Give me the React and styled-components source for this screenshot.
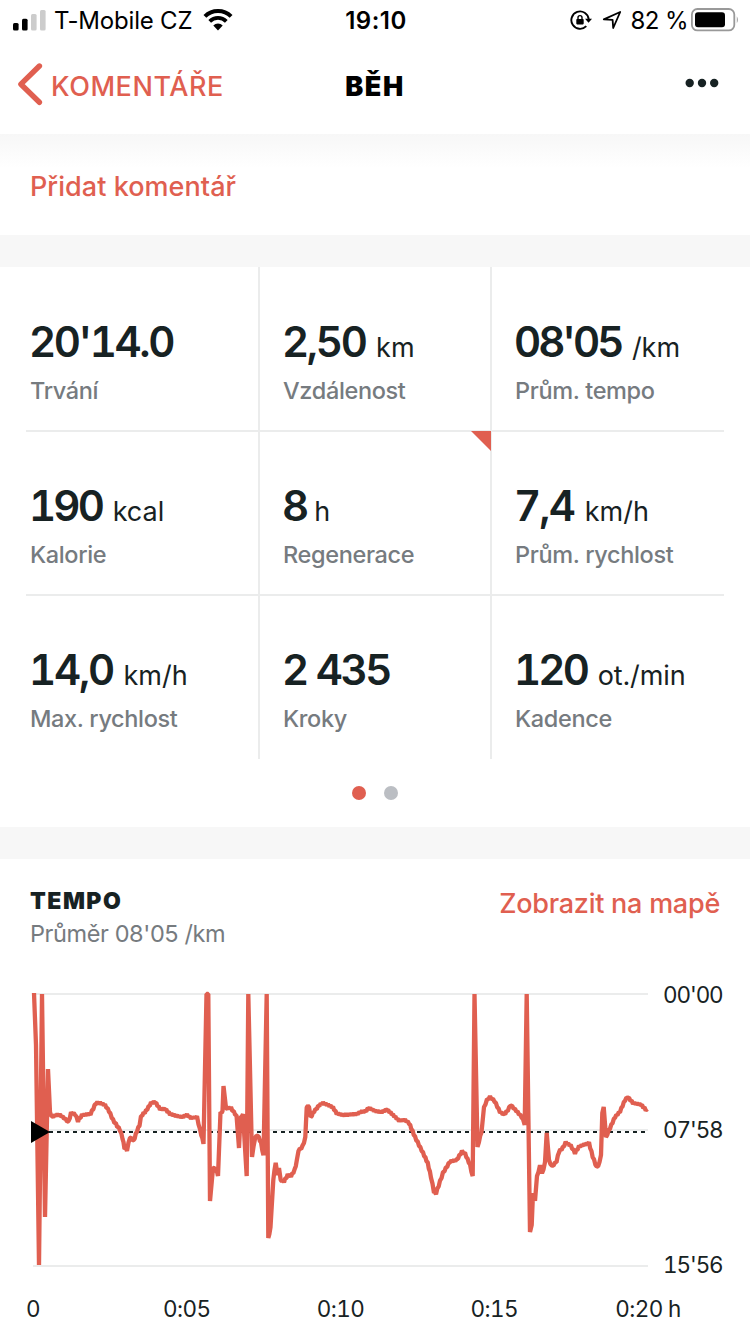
import React from "react";
import styled, { createGlobalStyle } from "styled-components";

const GlobalStyle = createGlobalStyle`
  * {
    box-sizing: border-box;
  }
  body {
    margin: 0;
    background-color: #ffffff;
    color: #172223;
    font-family: Inter, "Liberation Sans", sans-serif;
  }
`;

const Screen = styled.div`
  width: 750px;
  height: 1334px;
  overflow: hidden;
  background-color: #ffffff;
`;

const StatusBar = styled.div`
  display: grid;
  grid-template-columns: minmax(0, 1fr) auto minmax(0, 1fr);
  align-items: center;
  height: 40px;
  padding: 0 11px 0 13px;
  color: #000000;
  font-size: 24px;
  line-height: 38px;
`;

const StatusGroup = styled.div`
  display: flex;
  align-items: center;
  justify-content: ${({ $end }) => ($end ? "flex-end" : "flex-start")};
`;

const Carrier = styled.span`
  margin: 0 11px 0 8px;
  padding-top: 2px;
  letter-spacing: -0.2px;
`;

const Clock = styled.span`
  padding-top: 2px;
  font-weight: 600;
  letter-spacing: 0.5px;
`;

const Percent = styled.span`
  margin: 0 3px 0 9px;
  padding-top: 2px;
  letter-spacing: -0.6px;
`;

const Header = styled.header`
  display: grid;
  grid-template-columns: minmax(0, 1fr) auto minmax(0, 1fr);
  align-items: center;
  height: 94px;
  padding: 0 16px;
`;

const Back = styled.div`
  display: flex;
  align-items: center;
  gap: 7px;
  color: #e05f50;
  font-size: 27px;
  font-weight: 500;
  line-height: 40px;
  letter-spacing: 0.55px;

  svg {
    margin-bottom: 6px;
  }
`;

const Title = styled.h1`
  margin: 0;
  color: #000000;
  font-size: 27px;
  font-weight: 900;
  line-height: 40px;
  letter-spacing: 1.6px;
`;

const MoreIcon = styled.svg`
  justify-self: end;
  margin: 0 15px 8px 0;
`;

const Comment = styled.div`
  height: 101px;
  padding: 33px 30px 0;
  background: linear-gradient(#f7f7f7, #ffffff 34px);
`;

const Action = styled.span`
  color: #e05f50;
  font-size: 27px;
  font-weight: 500;
  line-height: 40px;
  letter-spacing: ${({ $spacing }) => $spacing || "0"};
`;

const Gap = styled.div`
  height: 32px;
  background-color: #f7f7f7;
`;

const Stats = styled.div`
  display: grid;
  grid-template-columns: 234px 232px 232px;
  grid-template-rows: 165px 164px 163px;
  padding: 0 26px;
`;

const Cell = styled.div`
  position: relative;
  display: flex;
  flex-direction: column;
  justify-content: flex-end;
  padding: 0 0 24px 23px;
  border-right: 2px solid #ebecec;
  border-bottom: 2px solid #ebecec;

  &:nth-child(3n + 1) {
    padding-left: 4px;
  }
  &:nth-child(3n) {
    border-right: none;
  }
  &:nth-child(n + 7) {
    padding-bottom: 25px;
    border-bottom: none;
  }
`;

const Value = styled.div`
  display: flex;
  align-items: baseline;
  gap: 10.5px;
  height: 48px;
  margin-left: -1px;
  font-size: 42px;
  font-weight: 600;
  line-height: 48px;
  white-space: pre;
  letter-spacing: ${({ $spacing }) => $spacing}px;
  font-feature-settings: "tnum";
`;

const Unit = styled.span`
  font-size: 27px;
  font-weight: 400;
  line-height: 30px;
  letter-spacing: 0;
`;

const Label = styled.div`
  margin-top: 10px;
  color: #767b7f;
  font-size: 23.5px;
  font-weight: 500;
  line-height: 30px;
  letter-spacing: -0.35px;
`;

const Corner = styled.div`
  position: absolute;
  top: -1px;
  right: -1px;
  width: 20px;
  height: 20px;
  background-color: #e05f50;
  clip-path: polygon(0 0, 100% 0, 100% 100%);
`;

const Pager = styled.div`
  display: flex;
  justify-content: center;
  align-items: center;
  gap: 18px;
  height: 68px;
`;

const Dot = styled.span`
  width: 14px;
  height: 14px;
  border-radius: 50%;
  background-color: ${({ $active }) => ($active ? "#e05f50" : "#bbbec3")};
`;

const Tempo = styled.section`
  padding-top: 25px;
`;

const TempoHead = styled.div`
  display: flex;
  justify-content: space-between;
  height: 101px;
  padding: 0 30px;
`;

const TempoTitle = styled.h2`
  margin: 0 0 1px;
  font-size: 23px;
  font-weight: 900;
  line-height: 34px;
  letter-spacing: 1.5px;
`;

const Average = styled.div`
  color: #767b7f;
  font-size: 23.5px;
  line-height: 30px;
  letter-spacing: -0.4px;
`;

const Plot = styled.div`
  display: flex;
  gap: 13px;
  height: 290px;
  padding-left: 30px;
`;

const Scale = styled.div`
  display: flex;
  flex-direction: column;
  justify-content: space-between;
  height: 300px;
  margin-top: -5px;
  font-size: 22.5px;
  line-height: 30px;
  letter-spacing: -1.1px;
  font-feature-settings: "tnum";
`;

const TimeAxis = styled.div`
  display: flex;
  justify-content: space-between;
  width: 648px;
  padding-left: 33px;
  margin-top: 18px;
  font-size: 22.5px;
  line-height: 32px;
  letter-spacing: -0.6px;
  font-feature-settings: "tnum";
`;

const Tick = styled.span`
  display: flex;
  justify-content: center;
  width: 0;
  white-space: nowrap;
`;

const stats = [
  { value: "20'14.0", spacing: -2.4, label: "Trvání" },
  { value: "2,50", unit: "km", spacing: -2.3, label: "Vzdálenost" },
  { value: "08'05", unit: "/km", spacing: -3, label: "Prům. tempo" },
  { value: "190", unit: "kcal", spacing: -2.8, label: "Kalorie" },
  { value: "8", unit: "h", spacing: -5.5, label: "Regenerace", marked: true },
  { value: "7,4", unit: "km/h", spacing: -1.8, label: "Prům. rychlost" },
  { value: "14,0", unit: "km/h", spacing: -2.2, label: "Max. rychlost" },
  { value: "2 435", spacing: -2.4, label: "Kroky" },
  { value: "120", unit: "ot./min", spacing: -2.8, label: "Kadence" },
];

const pace = [
  [34, 993], [36, 1045], [39, 1265], [42, 994], [45, 1217], [48, 1069], [50, 1112],
  [52, 1117], [56, 1115], [60, 1115], [64, 1118], [68.5, 1122], [71, 1113], [75, 1114],
  [78, 1121], [82, 1115], [90.5, 1114], [96, 1103], [100, 1103], [105, 1105], [109, 1111],
  [113, 1120], [120, 1130], [122.5, 1138], [124.5, 1148], [127, 1150], [130, 1137],
  [133.5, 1141], [137, 1131], [139.5, 1125], [141, 1116], [146, 1111], [151, 1103],
  [155, 1102], [160, 1109], [165, 1109], [170, 1114], [177, 1116], [182, 1117], [187, 1115],
  [191, 1118], [197, 1117], [200, 1130], [203.5, 1143], [206.5, 994], [208.3, 994],
  [210, 1201], [213, 1168], [216, 1170], [218, 1175], [220.5, 1112], [222.5, 1112],
  [223.5, 1086], [226, 1108], [231, 1108], [236.5, 1116], [239, 1148], [240.5, 1117],
  [243, 1115], [246.7, 1176], [248.3, 994], [252, 1157], [255, 1138], [257.7, 1135],
  [261, 1143], [263.5, 1156], [266.7, 994], [268.3, 1238], [270.5, 1228], [273.3, 1180],
  [275.7, 1162], [277.5, 1175], [279, 1168], [280.7, 1180], [284, 1181.5], [287.7, 1175],
  [291, 1176], [294.5, 1170.5], [297, 1160], [298.5, 1151], [302.5, 1146.5],
  [305.3, 1138], [306.7, 1107.5], [309, 1106], [310.7, 1117], [314, 1111.5],
  [319.5, 1105], [323, 1103], [328, 1105], [333, 1107.5], [336.7, 1113.5], [343, 1115],
  [350, 1114.5], [356.7, 1114], [362, 1111.5], [365, 1111.5], [369, 1108], [375, 1111],
  [381.7, 1112], [387, 1109.5], [393, 1115], [399, 1120.5], [405, 1120], [409, 1123],
  [415, 1137], [423, 1153], [427.7, 1163], [431, 1177], [434, 1192], [436, 1193.5],
  [440, 1181.5], [443, 1173], [450, 1161.5], [456.7, 1160], [462, 1151.5], [465, 1153.5],
  [470, 1165], [472.7, 1177], [474.5, 994], [477.5, 1147], [481.5, 1131.5], [484, 1107],
  [487, 1100], [490, 1097], [494.5, 1101], [500, 1112], [504, 1114.5], [507.7, 1110.5],
  [510.7, 1105], [515, 1109.5], [521.5, 1116.5], [524.7, 1124], [526.7, 994],
  [530, 1232], [531.7, 1225], [533, 1193], [535, 1200], [537, 1176], [540, 1166],
  [542, 1174], [545, 1163], [546.7, 1133], [549, 1160], [552, 1166.5], [556.5, 1161.5],
  [559, 1151.5], [562.7, 1148], [565.7, 1142.5], [570.7, 1145.5], [575, 1153],
  [579, 1146.5], [589, 1143], [592.7, 1156.5], [596.7, 1167.5], [599.5, 1163],
  [601, 1155], [602.3, 1113], [603.7, 1107], [606, 1137], [610, 1128], [615, 1117],
  [620, 1111.5], [625, 1100], [627.7, 1097], [633, 1103], [640.7, 1104.5],
  [645.7, 1109.5], [647.5, 1109],
];

// the pace steps slightly up and down between samples wherever it is calm
const tracePace = (points) => {
  const out = [points[0]];
  let sign = 1;
  for (let i = 1; i < points.length; i++) {
    const [x0, y0] = points[i - 1];
    const [x1, y1] = points[i];
    const steps = Math.abs(y1 - y0) > 20 ? 1 : Math.max(1, Math.round((x1 - x0) / 1.3));
    for (let s = 1; s <= steps; s++) {
      const t = s / steps;
      const shift = steps > 1 ? 0.9 * sign : 0;
      out.push([x0 + (x1 - x0) * t, y0 + (y1 - y0) * t + shift]);
      sign = -sign;
    }
  }
  return out.map(([x, y]) => `${x.toFixed(1)},${y.toFixed(1)}`).join(" ");
};

const SignalIcon = () => (
  <svg width="33" height="22" viewBox="0 0 33 22">
    <rect x="0" y="14" width="5.6" height="7.5" rx="1.5" fill="#000" />
    <rect x="9" y="9.7" width="5.6" height="11.8" rx="1.5" fill="#000" />
    <rect x="18" y="5" width="5.6" height="16.5" rx="1.5" fill="#ccc" />
    <rect x="27" y="1" width="5.6" height="20.5" rx="1.5" fill="#ccc" />
  </svg>
);

const WifiIcon = () => (
  <svg width="30" height="22" viewBox="0 0 30 22" fill="none" stroke="#000">
    <path d="M1.9 7.4 A18.6 18.6 0 0 1 28.1 7.4" strokeWidth="4" />
    <path d="M6.7 12.3 A11.8 11.8 0 0 1 23.3 12.3" strokeWidth="3.8" />
    <path d="M10.3 16.4 A6.8 6.8 0 0 1 19.7 16.4 L15 21.6 Z" fill="#000" stroke="none" />
  </svg>
);

const LockIcon = () => (
  <svg width="22" height="22" viewBox="0 0 22 22" fill="none" stroke="#000">
    <path d="M16.3 17.2 A8.7 8.7 0 1 1 18.7 10.2" strokeWidth="1.9" />
    <path d="M15 9.8 H22 L18.5 13.8 Z" fill="#000" stroke="none" />
    <rect x="6.3" y="10" width="7.4" height="5.4" rx="0.8" fill="#000" stroke="none" />
    <path d="M8 10.4 V8.6 A2 2 0 0 1 12 8.6 V10.4" strokeWidth="1.4" />
  </svg>
);

const LocationIcon = styled.svg`
  margin-left: 10px;
`;

const BatteryIcon = () => (
  <svg width="48" height="24" viewBox="0 0 48 24">
    <rect x="0.9" y="1" width="42.4" height="21.4" rx="5.5" fill="none" stroke="#999" strokeWidth="1.8" />
    <rect x="4" y="4.3" width="30" height="15" rx="3" fill="#000" />
    <path d="M45.8 8.2 Q48 11.7 45.8 15.2 Z" fill="#999" />
  </svg>
);

const BackIcon = () => (
  <svg width="28" height="44" viewBox="0 0 28 44">
    <path
      d="M23.4 4 L4.9 22.2 L23.4 40.3"
      fill="none"
      stroke="#e05f50"
      strokeWidth="5.4"
      strokeLinecap="round"
      strokeLinejoin="round"
    />
  </svg>
);

const PaceChart = () => (
  <svg width="620" height="290" viewBox="30 985 620 290">
    <g stroke="#ebecec" strokeWidth="2">
      <line x1="33" y1="994" x2="648" y2="994" />
      <line x1="33" y1="1130" x2="648" y2="1130" />
      <line x1="33" y1="1266" x2="648" y2="1266" />
    </g>
    <line x1="49" y1="1132" x2="646" y2="1132" stroke="#172223" strokeWidth="2" strokeDasharray="4 4" />
    <polyline
      points={tracePace(pace)}
      fill="none"
      stroke="#e05f50"
      strokeWidth="4.3"
      strokeLinejoin="bevel"
    />
    <polygon points="31,1121 50,1132 31,1143" fill="#000" />
  </svg>
);

const App = () => {
  return (
    <Screen>
      <GlobalStyle />
      <StatusBar>
        <StatusGroup>
          <SignalIcon />
          <Carrier>T-Mobile CZ</Carrier>
          <WifiIcon />
        </StatusGroup>
        <Clock>19:10</Clock>
        <StatusGroup $end>
          <LockIcon />
          <LocationIcon width="20" height="20" viewBox="0 0 20 20">
            <path
              d="M1.8 9.4 L18.2 2 L11.2 18 L10.6 9.8 Z"
              fill="none"
              stroke="#000"
              strokeWidth="1.8"
              strokeLinejoin="round"
            />
          </LocationIcon>
          <Percent>82 %</Percent>
          <BatteryIcon />
        </StatusGroup>
      </StatusBar>
      <Header>
        <Back>
          <BackIcon />
          KOMENTÁŘE
        </Back>
        <Title>BĚH</Title>
        <MoreIcon width="34" height="10" viewBox="0 0 34 10" fill="#172223">
          <circle cx="4.7" cy="5" r="4.2" />
          <circle cx="17" cy="5" r="4.2" />
          <circle cx="29.2" cy="5" r="4.2" />
        </MoreIcon>
      </Header>
      <Comment>
        <Action $spacing="0.05px">Přidat komentář</Action>
      </Comment>
      <Gap />
      <Stats>
        {stats.map((stat) => (
          <Cell key={stat.label}>
            {stat.marked && <Corner />}
            <Value $spacing={stat.spacing}>
              {stat.value}
              {stat.unit && <Unit>{stat.unit}</Unit>}
            </Value>
            <Label>{stat.label}</Label>
          </Cell>
        ))}
      </Stats>
      <Pager>
        <Dot $active />
        <Dot />
      </Pager>
      <Gap />
      <Tempo>
        <TempoHead>
          <div>
            <TempoTitle>TEMPO</TempoTitle>
            <Average>Průměr 08'05 /km</Average>
          </div>
          <Action $spacing="-0.25px">Zobrazit na mapě</Action>
        </TempoHead>
        <Plot>
          <PaceChart />
          <Scale>
            <span>00'00</span>
            <span>07'58</span>
            <span>15'56</span>
          </Scale>
        </Plot>
        <TimeAxis>
          <Tick>0</Tick>
          <Tick>0:05</Tick>
          <Tick>0:10</Tick>
          <Tick>0:15</Tick>
          <Tick>0:20 h</Tick>
        </TimeAxis>
      </Tempo>
    </Screen>
  );
};

export default App;
